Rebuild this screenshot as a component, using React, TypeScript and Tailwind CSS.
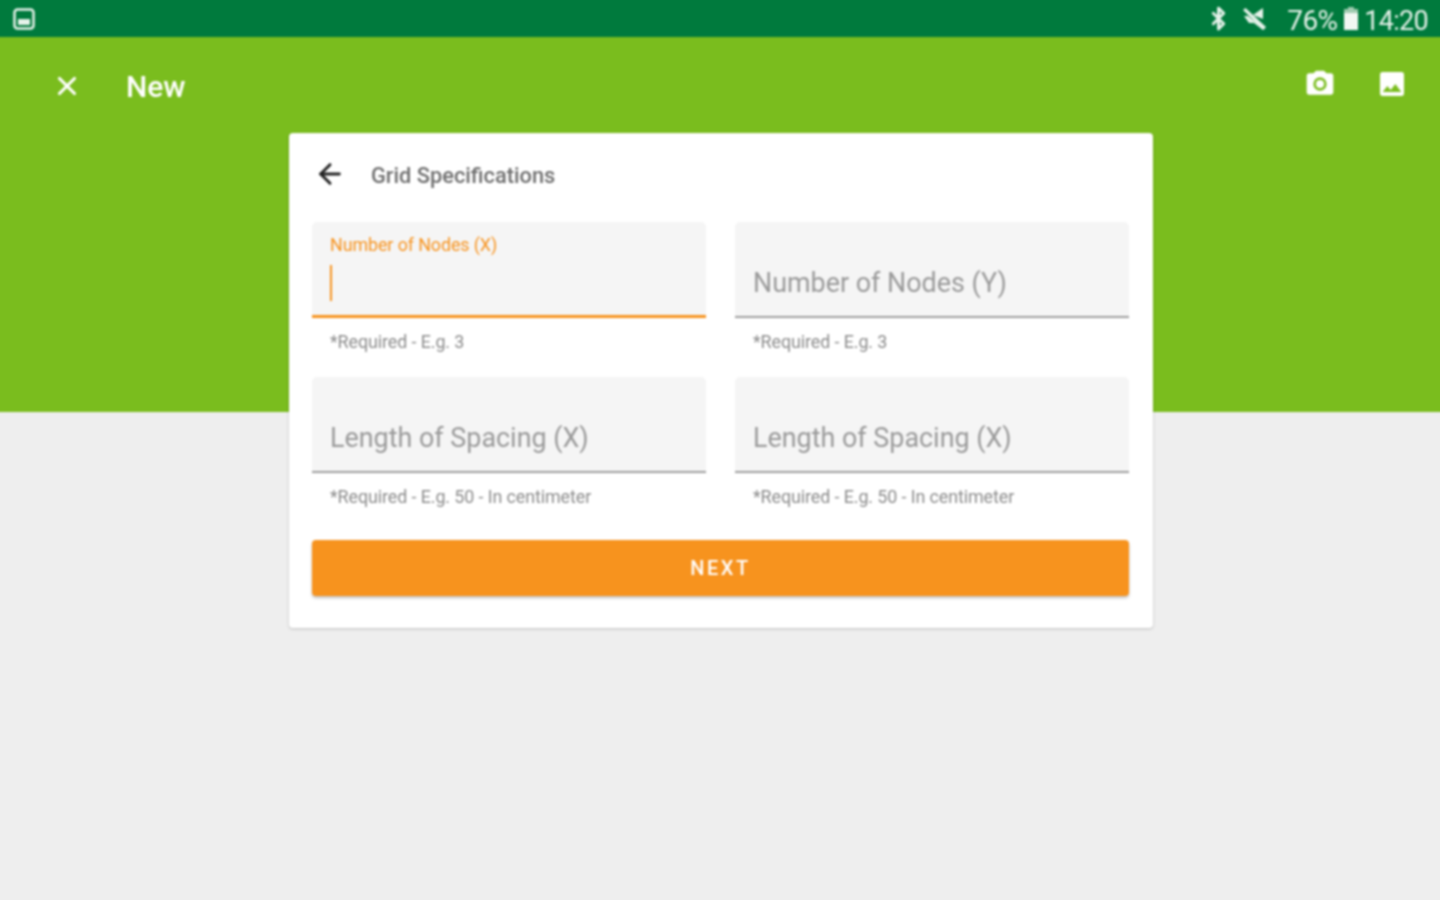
import React from "react";
import { X, ArrowLeft, Bluetooth } from "lucide-react";

const font = "font-['Roboto','Liberation_Sans',sans-serif]";

type FieldProps = {
  label: string;
  helper: string;
  active?: boolean;
};

const Field: React.FC<FieldProps> = ({ label, helper, active }) => {
  return (
    <div className="flex flex-col">
      <div
        className={
          "h-[96px] rounded-t-[5px] bg-[#f5f5f5] px-[18px] " +
          (active ? "border-b-[3px] border-[#f7931e]" : "border-b-2 border-[#9e9e9e]")
        }
      >
        {active ? (
          <div>
            <div className="pt-[13px] text-[17.9px] leading-[20px] tracking-[-0.1px] text-[#f7931e]">{label}</div>
            <div className="mt-[10px] h-[36px] w-[2px] bg-[#f7931e]" />
          </div>
        ) : (
          <div className="pt-[43px] text-[26.9px] leading-[36px] text-[#9a9a9a]">{label}</div>
        )}
      </div>
      <div className="h-[59px] px-[18px] pt-[14px] text-[17.9px] leading-[20px] tracking-[-0.1px] text-[#8c8c8c]">
        {helper}
      </div>
    </div>
  );
};

const App: React.FC = () => {
  return (
    <div className="h-[900px] overflow-hidden">
      {/* blur bleeds past the edges, so this layer is 4px bigger than the page */}
      <div className={"w-[1448px] min-h-[908px] -ml-[4px] -mt-[4px] bg-[#eeeeee] blur-[0.8px] " + font}>
        {/* status bar */}
        <div className="h-[41px] pt-[4px] bg-[#007a3d] flex items-center justify-between pl-[17px] pr-[16px] text-white">
          <svg width="22" height="22" viewBox="0 0 22 22" fill="none">
            <rect x="1.5" y="1.5" width="19" height="19" rx="3" stroke="#e6f2ea" strokeWidth="2.5" />
            <rect x="5" y="11" width="12" height="6" fill="#e6f2ea" />
          </svg>
          <div className="flex items-center">
            <Bluetooth size={25} strokeWidth={2.8} className="text-[#e6f2ea]" />
            <svg width="26" height="26" viewBox="0 0 26 26" className="ml-[10px]" fill="#e6f2ea">
              <path d="M12 9 L22 2 V13 Z" />
              <path d="M2 4 L4.5 2 L25 21 L22.5 24 Z" />
              <path d="M3 10 H7 L22 22 V24 L13 17 H8 Z" />
            </svg>
            <span className="ml-[20px] pt-[4px] text-[28px] leading-[36px] tracking-[-0.7px] text-[#e6f2ea]">76%</span>
            <svg width="16" height="26" viewBox="0 0 16 26" className="ml-[6px]">
              <rect x="5" y="1" width="6" height="3" fill="#9fcbb0" />
              <rect x="1" y="3" width="14" height="5" fill="#9fcbb0" />
              <rect x="1" y="7" width="14" height="17" fill="#f2f7f3" />
            </svg>
            <span className="ml-[5px] pt-[4px] text-[27px] leading-[36px] tracking-[-0.7px] text-[#e6f2ea]">14:20</span>
          </div>
        </div>

        {/* app bar */}
        <div className="h-[375px] bg-[#7abd1e]">
          <div className="h-[96px] flex items-start justify-between pl-[56px] pr-[36px] text-white">
            <div className="flex items-center h-[98px]">
              <X size={30} strokeWidth={2.5} />
              <span className="ml-[44px] pt-[2px] text-[30px] font-medium leading-[36px]">New</span>
            </div>
            <div className="flex items-center gap-[40px] h-[94px]">
              <svg width="32" height="32" viewBox="0 0 24 24" fill="white">
                <path
                  fillRule="evenodd"
                  d="M9 2 7.17 4H4a2 2 0 0 0-2 2v12a2 2 0 0 0 2 2h16a2 2 0 0 0 2-2V6a2 2 0 0 0-2-2h-3.17L15 2H9Zm3 15a5 5 0 1 1 0-10 5 5 0 0 1 0 10Zm0-2a3 3 0 1 0 0-6 3 3 0 0 0 0 6Z"
                />
              </svg>
              <svg width="32" height="32" viewBox="0 0 24 24" fill="white">
                <path
                  fillRule="evenodd"
                  d="M3 5a2 2 0 0 1 2-2h14a2 2 0 0 1 2 2v14a2 2 0 0 1-2 2H5a2 2 0 0 1-2-2V5Zm5.5 8.5L5 18h14l-4.5-6-3.5 4.5-2.5-3Z"
                />
              </svg>
            </div>
          </div>
        </div>

        {/* card */}
        <div className="ml-[293px] -mt-[279px] w-[864px] h-[495px] rounded-[4px] bg-white shadow-[0_1px_3px_rgba(0,0,0,0.2)] px-[23px] relative">
          <div className="h-[89px] flex items-center pb-[8px]">
            <ArrowLeft size={32} strokeWidth={2.2} className="text-[#222222] ml-[2px]" />
            <span className="ml-[25px] pt-[4px] text-[21.8px] font-medium leading-[28px] text-[#6f6f6f]">
              Grid Specifications
            </span>
          </div>
          <div className="grid grid-cols-[394px_394px] gap-x-[29px]">
            <Field label="Number of Nodes (X)" helper="*Required - E.g. 3" active />
            <Field label="Number of Nodes (Y)" helper="*Required - E.g. 3" />
            <Field label="Length of Spacing (X)" helper="*Required - E.g. 50 - In centimeter" />
            <Field label="Length of Spacing (X)" helper="*Required - E.g. 50 - In centimeter" />
          </div>
          <button className="mt-[8px] block h-[56px] w-[817px] rounded-[4px] bg-[#f7931e] text-[20px] font-medium tracking-[2.6px] text-white shadow-[0_2px_3px_rgba(0,0,0,0.25)]">
            NEXT
          </button>
        </div>
      </div>
    </div>
  );
};

export default App;
